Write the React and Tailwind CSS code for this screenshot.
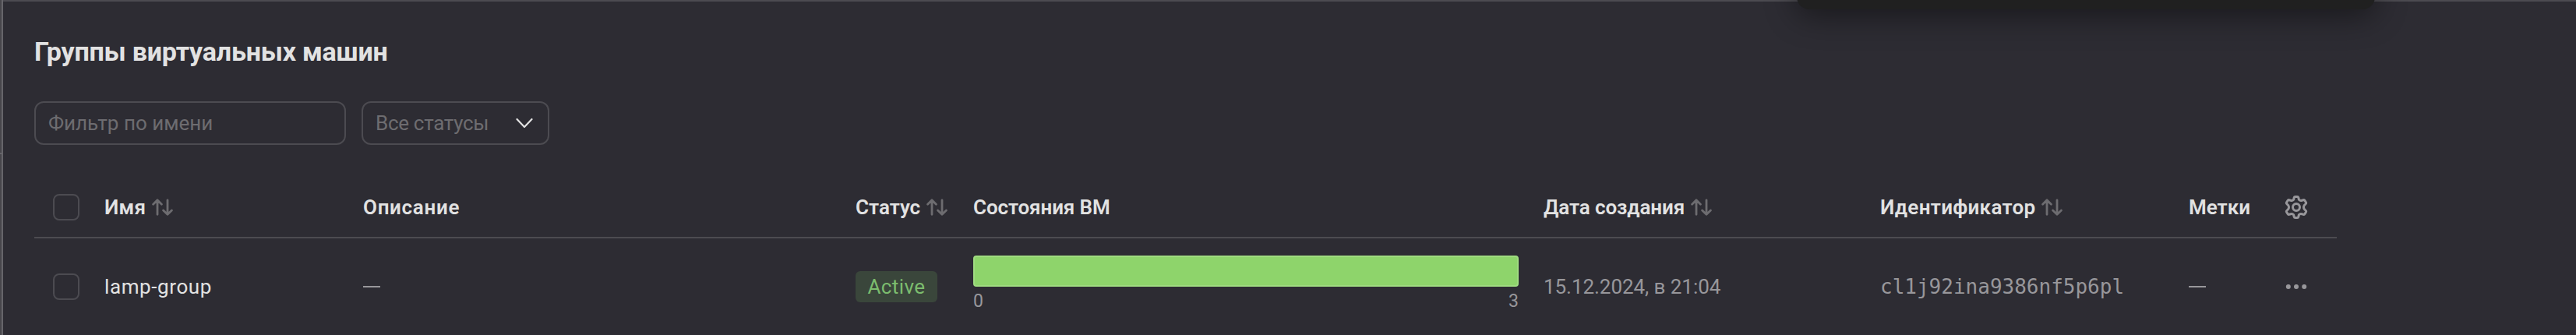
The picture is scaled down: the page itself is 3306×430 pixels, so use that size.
import React from "react";

const SortIcon = () => (
  <svg className="h-[22px] w-[27px] shrink-0" viewBox="0 0 27 22" fill="none" stroke="#6d6c70" strokeWidth="2.8" strokeLinecap="round" strokeLinejoin="round">
    <path d="M7 20.300V1.800M1.600 7.200L7 1.800L12.400 7.200M20 1.800V20.300M14.600 14.900L20 20.300L25.400 14.900" />
  </svg>
);

const GearIcon = () => (
  <svg className="size-8" viewBox="0 0 32 32" fill="none" stroke="#98979b" strokeWidth="3" strokeLinejoin="round">
    <path d="M13.200 3.700Q13.500 2.500 14.700 2.500H17.300Q18.500 2.500 18.800 3.700L19.400 6.300Q20.900 8 23.200 7.300L25.200 6.700Q26.400 6.400 27 7.400L28.400 9.800Q29 10.900 28.100 11.700L26.300 13.500Q24.700 16 26.300 18.500L28.100 20.300Q29 21.100 28.400 22.200L27 24.600Q26.400 25.600 25.200 25.300L23.200 24.700Q20.900 24 19.400 25.700L18.800 28.300Q18.500 29.500 17.300 29.500H14.700Q13.500 29.500 13.200 28.300L12.600 25.700Q11.100 24 8.800 24.700L6.800 25.300Q5.600 25.600 5 24.600L3.600 22.200Q3 21.100 3.900 20.300L5.700 18.500Q7.300 16 5.700 13.500L3.900 11.700Q3 10.900 3.600 9.800L5 7.400Q5.600 6.400 6.800 6.700L8.800 7.300Q11.100 8 12.600 6.300Z" />
    <circle cx="16" cy="16" r="4.500" />
  </svg>
);

const Checkbox = () => (
  <span role="checkbox" aria-checked="false" className="ml-6 block size-[34px] rounded-[8px] border-2 border-[#4c4b51]" />
);

const row = "grid grid-cols-[90px_332px_632px_151px_732px_432px_396px_122px_69px] items-center whitespace-nowrap";

const Head = ({ children, sortable, className = "" }) => (
  <div className="flex items-center gap-2 font-semibold text-[#e2e2e2]">
    <span className={className}>{children}</span>
    {sortable && <SortIcon />}
  </div>
);

const Dash = () => <span className="block h-[2px] w-[22px] bg-[#98979b]" />;

export default function App() {
  return (
    <div className="relative flex h-[430px] w-[3306px] overflow-hidden bg-[#2d2c33] font-[Roboto,'Noto_Sans',sans-serif] text-[26px] leading-9">
      <div className="flex w-1 shrink-0 flex-col border-r-2 border-[#66656a] bg-[#47464b] pt-[196px]">
        <div className="h-[2px] bg-[#66656a]" />
      </div>
      <main className="flex flex-1 flex-col border-t-2 border-[#4c4b51] pl-10">
        <h1 className="mt-[40px] h-12 whitespace-nowrap text-[34px] font-bold leading-[48px] tracking-[-0.2px] text-[#e2e2e2]">Группы виртуальных машин</h1>
        <div className="mt-[40px] flex gap-5">
          <div className="flex h-14 w-[400px] items-center whitespace-nowrap rounded-[12px] border-2 border-[#4c4b51] pl-4 text-[#6d6c70]">
            <span>Фильтр по имени</span>
          </div>
          <div className="flex h-14 w-[241px] items-center justify-between whitespace-nowrap rounded-[12px] border-2 border-[#4c4b51] pl-4 pr-[19px] text-[#6d6c70]">
            <span className="tracking-[-0.3px]">Все статусы</span>
            <svg className="h-[14px] w-[22px]" viewBox="0 0 22 14" fill="none" stroke="#e2e2e2" strokeWidth="2.2" strokeLinecap="round" strokeLinejoin="round">
              <path d="M1.500 2L11 12L20.500 2" />
            </svg>
          </div>
        </div>
        <section className="mt-10 w-[2955px]">
          <div className={`${row} h-20 border-b-2 border-[#4c4b51] pt-[2px]`}>
            <Checkbox />
            <Head sortable className="tracking-[0.3px]">Имя</Head>
            <Head className="tracking-[0.7px]">Описание</Head>
            <Head sortable>Статус</Head>
            <Head className="tracking-[-0.1px]">Состояния ВМ</Head>
            <Head sortable className="tracking-[-0.1px]">Дата создания</Head>
            <Head sortable className="tracking-[0.3px]">Идентификатор</Head>
            <Head>Метки</Head>
            <GearIcon />
          </div>
          <div className={`${row} h-[124px] text-[#98979b]`}>
            <Checkbox />
            <span className="tracking-[0.6px] text-[#e2e2e2]">lamp-group</span>
            <Dash />
            <span className="flex h-10 w-[105px] items-center justify-center rounded-[6px] bg-[#3a463b] tracking-[0.4px] text-[#7cbd6e]">Active</span>
            <div className="w-[700px] pb-1">
              <div className="h-10 rounded-[4px] border-2 border-[#9fdb80] bg-[#8ed46b]" />
              <div className="flex h-9 items-center justify-between pt-[2px] text-[23px]">
                <span>0</span>
                <span>3</span>
              </div>
            </div>
            <span className="tracking-[-0.05px]">15.12.2024, в 21:04</span>
            <span className="font-['DejaVu_Sans_Mono',monospace]">cl1j92ina9386nf5p6pl</span>
            <Dash />
            <svg className="h-2 w-8" viewBox="0 0 32 8" fill="#98979b">
              <circle cx="5.800" cy="4" r="3" />
              <circle cx="16" cy="4" r="3" />
              <circle cx="26.200" cy="4" r="3" />
            </svg>
          </div>
        </section>
      </main>
      <div className="absolute left-[2306px] top-[-60px] h-[72px] w-[742px] rounded-[16px] bg-[#202020] shadow-[0_8px_40px_rgba(0,0,0,0.45)]" />
    </div>
  );
}
